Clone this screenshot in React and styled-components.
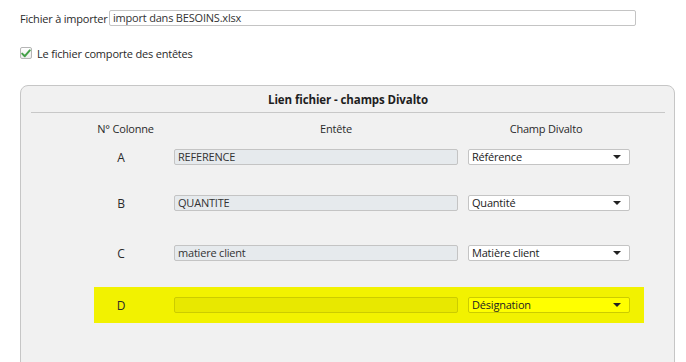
import React from 'react';
import styled, { createGlobalStyle } from 'styled-components';

const GlobalStyle = createGlobalStyle`
  body {
    margin: 0;
    background: #ffffff;
    font-family: "Open Sans", "Noto Sans", sans-serif;
    font-size: 11px;
    letter-spacing: -0.2px;
    color: #2a2a2a;
  }
`;

const Page = styled.div`
  padding: 10px 11px 0 20px;
  height: 362px;
  box-sizing: border-box;
  overflow: hidden;
`;

const FileRow = styled.div`
  display: flex;
  align-items: center;
  height: 16px;
`;

const Label = styled.span`
  width: 89px;
  white-space: nowrap;
`;

const TextInput = styled.div`
  box-sizing: border-box;
  height: 16px;
  width: ${(p) => p.$width}px;
  margin-left: ${(p) => p.$offset || 0}px;
  border: 1px solid ${(p) => (p.$highlight ? '#cccc00' : '#c4c4c4')};
  border-radius: 2px;
  background: ${(p) => (p.$highlight ? '#e8e800' : p.$disabled ? '#e6eaed' : '#fff')};
  color: #333;
  padding: 0 3px;
  line-height: 14px;
  white-space: nowrap;
  overflow: hidden;
`;

const CheckRow = styled.label`
  display: flex;
  align-items: center;
  gap: 5px;
  margin-top: 20px;
  height: 14px;
`;

const CheckBox = styled.span`
  box-sizing: border-box;
  width: 12px;
  height: 12px;
  border: 1px solid #b5b5b5;
  border-radius: 2px;
  background: linear-gradient(#ffffff, #ececec);
  display: flex;
  align-items: center;
  justify-content: center;
`;

const Panel = styled.section`
  margin-top: 25px;
  border: 1px solid #c6c6c6;
  border-radius: 8px 8px 0 0;
  background: #f1f1f1;
  height: 300px;
`;

const PanelTitle = styled.div`
  margin: 0 9px 0 10px;
  height: 26px;
  line-height: 27px;
  text-align: center;
  font-size: 11.5px;
  letter-spacing: -0.1px;
  font-weight: 700;
  color: #1e1e1e;
  border-bottom: 1px solid #c8c8c8;
`;

const HeadRow = styled.div`
  display: grid;
  grid-template-columns: 63px 341px 96px;
  padding: 8px 0 0 73px;
  height: 26px;
  box-sizing: border-box;
  line-height: 16px;
`;

const HeadCell = styled.div`
  text-align: center;
  white-space: nowrap;
  padding-left: ${(p) => p.$indent || 0}px;
`;

const Rows = styled.div`
  padding-left: 73px;
`;

const Row = styled.div`
  display: grid;
  grid-template-columns: 54px 320px 176px;
  width: 550px;
  height: 36px;
  align-items: center;
  margin-top: ${(p) => p.$space}px;
  background: ${(p) => (p.$highlight ? '#f2f200' : 'transparent')};
`;

const Letter = styled.div`
  text-align: center;
  font-size: 12px;
`;

const Select = styled.div`
  box-sizing: border-box;
  width: 162px;
  height: 16px;
  border: 1px solid ${(p) => (p.$highlight ? '#cccc00' : '#c4c4c4')};
  border-radius: 2px;
  background: ${(p) => (p.$highlight ? '#ffff00' : '#fff')};
  display: flex;
  align-items: center;
  justify-content: space-between;
  padding: 0 8px 0 3px;
  line-height: 14px;
  color: #222;
`;

const Arrow = styled.span`
  width: 0;
  height: 0;
  border-left: 4px solid transparent;
  border-right: 4px solid transparent;
  border-top: 4px solid #222;
`;

const mappings = [
  { col: 'A', header: 'REFERENCE', field: 'Référence', space: 0 },
  { col: 'B', header: 'QUANTITE', field: 'Quantité', space: 10 },
  { col: 'C', header: 'matiere client', field: 'Matière client', space: 14 },
  { col: 'D', header: '', field: 'Désignation', space: 16, highlight: true },
];

export default function App() {
  return (
    <>
      <GlobalStyle />
      <Page>
        <FileRow>
          <Label>Fichier à importer</Label>
          <TextInput $width={527}>import dans BESOINS.xlsx</TextInput>
        </FileRow>

        <CheckRow>
          <CheckBox>
            <svg width="10" height="9" viewBox="0 0 10 9">
              <path d="M1.2 4.6 L3.8 7.2 L8.8 1.4" fill="none" stroke="#44a048" strokeWidth="2" strokeLinecap="round" strokeLinejoin="round" />
            </svg>
          </CheckBox>
          <span>Le fichier comporte des entêtes</span>
        </CheckRow>

        <Panel>
          <PanelTitle>Lien fichier - champs Divalto</PanelTitle>
          <HeadRow>
            <HeadCell>N° Colonne</HeadCell>
            <HeadCell $indent={17}>Entête</HeadCell>
            <HeadCell>Champ Divalto</HeadCell>
          </HeadRow>
          <Rows>
            {mappings.map((m) => (
              <Row key={m.col} $space={m.space} $highlight={m.highlight}>
                <Letter>{m.col}</Letter>
                <TextInput $width={284} $offset={26} $disabled $highlight={m.highlight}>
                  {m.header}
                </TextInput>
                <Select $highlight={m.highlight}>
                  <span>{m.field}</span>
                  <Arrow />
                </Select>
              </Row>
            ))}
          </Rows>
        </Panel>
      </Page>
    </>
  );
}
